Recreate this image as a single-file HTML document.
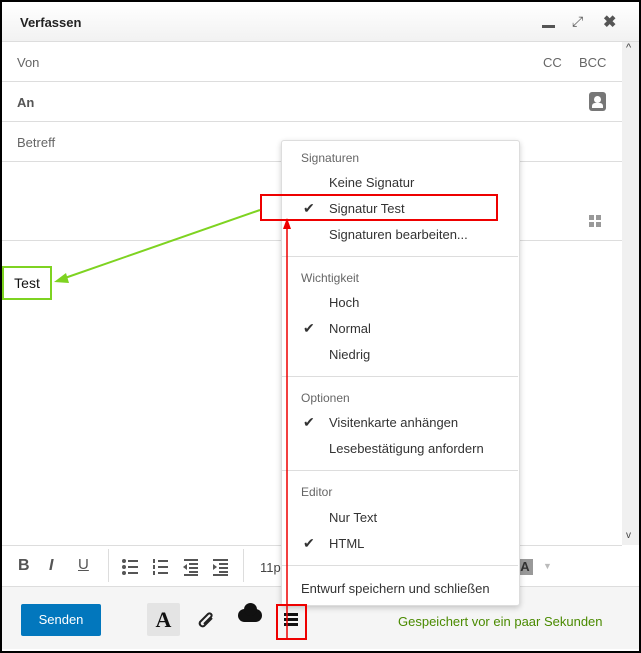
<!DOCTYPE html>
<html><head><style>
body{margin:0;width:641px;height:653px;overflow:hidden;font-family:"Liberation Sans",sans-serif;background:#fff;position:relative}
.a{position:absolute}
.frame{left:0;top:0;width:637px;height:649px;border:2px solid #000;background:#fff}
.lbl{font-size:13px;color:#666}
.mi{position:absolute;left:329px;font-size:13px;color:#333}
.mh{position:absolute;left:301px;font-size:12px;color:#666}
.ck{position:absolute;left:303px;font-size:14px;color:#333}
.hr{position:absolute;height:1px;background:#ddd}
</style></head><body>
<div class="a frame"></div>
<div class="a" style="left:2px;top:2px;width:637px;height:39px;background:linear-gradient(#fff,#f2f2f2);border-bottom:1px solid #ddd"></div>
<div class="a" style="left:20px;top:15px;font-size:13px;font-weight:bold;color:#222">Verfassen</div>
<div class="a" style="left:542px;top:25px;width:13px;height:3px;background:#555"></div>
<div class="a" style="left:572px;top:13px;font-size:14px;color:#555">⤢</div>
<div class="a" style="left:603px;top:12px;font-size:16px;font-weight:bold;color:#555">✖</div>
<div class="a" style="left:622px;top:42px;width:17px;height:503px;background:#f0f0f0"></div>
<div class="a" style="left:626px;top:42px;font-size:11px;color:#444">^</div>
<div class="a" style="left:626px;top:530px;font-size:10px;color:#444">v</div>
<div class="hr" style="left:2px;top:81px;width:620px"></div>
<div class="hr" style="left:2px;top:121px;width:620px"></div>
<div class="hr" style="left:2px;top:161px;width:620px"></div>
<div class="hr" style="left:2px;top:240px;width:620px"></div>
<div class="a lbl" style="left:17px;top:55px">Von</div>
<div class="a lbl" style="left:543px;top:55px">CC</div>
<div class="a lbl" style="left:579px;top:55px">BCC</div>
<div class="a lbl" style="left:17px;top:95px;font-weight:bold;color:#555">An</div>
<div class="a" style="left:589px;top:92px;width:17px;height:19px;background:#777;border-radius:3px"></div>
<div class="a" style="left:594px;top:96px;width:7px;height:7px;background:#fff;border-radius:50%"></div>
<div class="a" style="left:592px;top:103px;width:11px;height:5px;background:#fff;border-radius:3px 3px 0 0"></div>
<div class="a lbl" style="left:17px;top:135px">Betreff</div>
<svg class="a" style="left:589px;top:215px" width="13" height="13"><rect x="0" y="0" width="5" height="5" fill="#999"/><rect x="7" y="0" width="5" height="5" fill="#999"/><rect x="0" y="7" width="5" height="5" fill="#999"/><rect x="7" y="7" width="5" height="5" fill="#999"/></svg>
<div class="a" style="left:2px;top:545px;width:620px;height:1px;background:#ddd"></div>
<div class="a" style="left:2px;top:546px;width:637px;height:40px;background:#fff;border-bottom:1px solid #ddd"></div>
<div class="a" style="left:18px;top:557px;font-size:16px;font-weight:bold;color:#555">B</div>
<div class="a" style="left:49px;top:557px;font-size:16px;font-style:italic;font-weight:bold;color:#555">I</div>
<div class="a" style="left:78px;top:556px;font-size:15px;color:#555;text-decoration:underline">U</div>
<div class="a" style="left:108px;top:549px;width:1px;height:33px;background:#ddd"></div>
<svg class="a" style="left:122px;top:558px" width="110" height="18" fill="#555">
<circle cx="2" cy="3" r="2"/><circle cx="2" cy="9" r="2"/><circle cx="2" cy="15" r="2"/>
<rect x="6" y="2" width="10" height="2"/><rect x="6" y="8" width="10" height="2"/><rect x="6" y="14" width="10" height="2"/>
<rect x="36" y="2" width="10" height="2"/><rect x="36" y="8" width="10" height="2"/><rect x="36" y="14" width="10" height="2"/>
<rect x="31" y="1" width="2" height="4"/><rect x="31" y="7" width="2" height="4"/><rect x="31" y="13" width="2" height="4"/>
<rect x="62" y="1" width="14" height="2"/><rect x="67" y="5" width="9" height="2"/><rect x="67" y="9" width="9" height="2"/><rect x="67" y="13" width="9" height="2"/><rect x="62" y="16" width="14" height="2"/><polygon points="61,9 65,6 65,12"/>
<rect x="91" y="1" width="15" height="2"/><rect x="97" y="5" width="9" height="2"/><rect x="97" y="9" width="9" height="2"/><rect x="97" y="13" width="9" height="2"/><rect x="91" y="16" width="15" height="2"/><polygon points="95,9 91,6 91,12"/>
</svg>
<div class="a" style="left:243px;top:549px;width:1px;height:33px;background:#ddd"></div>
<div class="a" style="left:260px;top:560px;font-size:13px;color:#444">11p</div>
<div class="a" style="left:517px;top:559px;width:16px;height:16px;background:#999;color:#333;font-size:13px;font-weight:bold;text-align:center">A</div>
<div class="a" style="left:543px;top:561px;font-size:9px;color:#bbb">▼</div>
<div class="a" style="left:2px;top:587px;width:637px;height:62px;background:#f5f5f5"></div>
<div class="a" style="left:21px;top:604px;width:80px;height:32px;background:#0277bd;border-radius:2px;color:#fff;font-size:13px;text-align:center;line-height:32px">Senden</div>
<div class="a" style="left:147px;top:603px;width:33px;height:33px;background:#e4e4e4;border-radius:2px;font-family:'Liberation Serif',serif;font-weight:bold;font-size:22px;text-align:center;line-height:33px;color:#111">A</div>
<svg class="a" style="left:196px;top:610px" width="22" height="22"><path d="M16 8 L8 16 a3 3 0 0 1 -4 -4 L12 4 a2 2 0 0 1 3 3 L8 14" fill="none" stroke="#222" stroke-width="2"/></svg>
<div class="a" style="left:238px;top:609px;width:24px;height:13px;background:#111;border-radius:7px"></div>
<div class="a" style="left:244px;top:603px;width:13px;height:13px;background:#111;border-radius:50%"></div>
<div class="a" style="left:284px;top:613px;width:14px;height:3px;background:#111;box-shadow:0 5px 0 #111,0 10px 0 #111"></div>
<div class="a" style="left:398px;top:614px;font-size:13px;color:#4a8a00">Gespeichert vor ein paar Sekunden</div>
<div class="a" style="left:281px;top:140px;width:237px;height:464px;background:#fff;border:1px solid #ddd;border-radius:3px;box-shadow:0 2px 6px rgba(0,0,0,.2)"></div>
<div class="mh" style="top:151px">Signaturen</div>
<div class="mi" style="top:175px">Keine Signatur</div>
<div class="ck" style="top:200px">✔</div><div class="mi" style="top:201px">Signatur Test</div>
<div class="mi" style="top:227px">Signaturen bearbeiten...</div>
<div class="hr" style="left:282px;top:256px;width:236px"></div>
<div class="mh" style="top:271px">Wichtigkeit</div>
<div class="mi" style="top:295px">Hoch</div>
<div class="ck" style="top:320px">✔</div><div class="mi" style="top:321px">Normal</div>
<div class="mi" style="top:347px">Niedrig</div>
<div class="hr" style="left:282px;top:376px;width:236px"></div>
<div class="mh" style="top:391px">Optionen</div>
<div class="ck" style="top:414px">✔</div><div class="mi" style="top:415px">Visitenkarte anhängen</div>
<div class="mi" style="top:441px">Lesebestätigung anfordern</div>
<div class="hr" style="left:282px;top:470px;width:236px"></div>
<div class="mh" style="top:485px">Editor</div>
<div class="mi" style="top:510px">Nur Text</div>
<div class="ck" style="top:535px">✔</div><div class="mi" style="top:536px">HTML</div>
<div class="hr" style="left:282px;top:565px;width:236px"></div>
<div class="a" style="left:301px;top:581px;font-size:13px;color:#333">Entwurf speichern und schließen</div>
<div class="a" style="left:260px;top:194px;width:234px;height:23px;border:2px solid #e00"></div>
<div class="a" style="left:276px;top:604px;width:27px;height:32px;border:2px solid #e00"></div>
<div class="a" style="left:2px;top:266px;width:46px;height:30px;border:2px solid #7ed321;font-size:14px;line-height:30px;text-align:center;color:#111">Test</div>
<svg class="a" style="left:0;top:0" width="641" height="653">
<line x1="287" y1="640" x2="287" y2="226" stroke="#e00" stroke-width="1.5"/>
<polygon points="287,218 283,229 291,229" fill="#e00"/>
<line x1="260" y1="210" x2="62" y2="279" stroke="#7ed321" stroke-width="2"/>
<polygon points="54,282 66,273 69,283" fill="#7ed321"/>
</svg>
</body></html>
